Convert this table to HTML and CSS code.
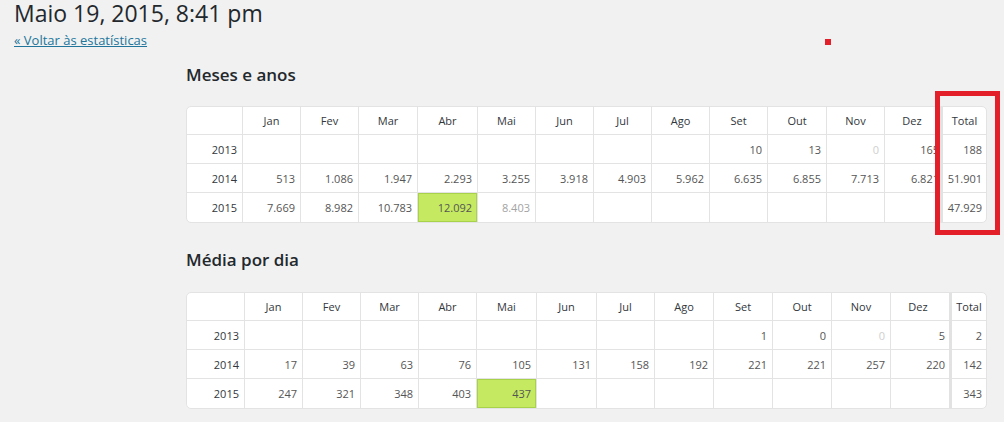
FILE: index.html
```html
<!DOCTYPE html>
<html lang="pt">
<head>
<meta charset="utf-8">
<title>Estatísticas</title>
<link rel="stylesheet" href="styles.css">
</head>
<body>
<div class="page">
  <h1 class="title">Maio 19, 2015, 8:41 pm</h1>
  <a class="back" href="#">« Voltar às estatísticas</a>

  <section class="block">
    <h2 class="block-title">Meses e anos</h2>
    <div class="stats t1">
      <div class="grid">
        <div class="c hd"></div><div class="c hd">Jan</div><div class="c hd">Fev</div><div class="c hd">Mar</div><div class="c hd">Abr</div><div class="c hd">Mai</div><div class="c hd">Jun</div><div class="c hd">Jul</div><div class="c hd">Ago</div><div class="c hd">Set</div><div class="c hd">Out</div><div class="c hd">Nov</div><div class="c hd last">Dez</div>
        <div class="c yr">2013</div><div class="c"></div><div class="c"></div><div class="c"></div><div class="c"></div><div class="c"></div><div class="c"></div><div class="c"></div><div class="c"></div><div class="c">10</div><div class="c">13</div><div class="c zero">0</div><div class="c last">165</div>
        <div class="c yr">2014</div><div class="c">513</div><div class="c">1.086</div><div class="c">1.947</div><div class="c">2.293</div><div class="c">3.255</div><div class="c">3.918</div><div class="c">4.903</div><div class="c">5.962</div><div class="c">6.635</div><div class="c">6.855</div><div class="c">7.713</div><div class="c last">6.821</div>
        <div class="c yr bot">2015</div><div class="c bot">7.669</div><div class="c bot">8.982</div><div class="c bot">10.783</div><div class="c bot hi">12.092</div><div class="c bot light">8.403</div><div class="c bot"></div><div class="c bot"></div><div class="c bot"></div><div class="c bot"></div><div class="c bot"></div><div class="c bot"></div><div class="c bot last"></div>
      </div>
      <div class="sep"></div>
      <div class="totals">
        <div class="c hd">Total</div>
        <div class="c">188</div>
        <div class="c">51.901</div>
        <div class="c bot">47.929</div>
      </div>
    </div>

    <h2 class="block-title second">Média por dia</h2>
    <div class="stats t2">
      <div class="grid">
        <div class="c hd"></div><div class="c hd">Jan</div><div class="c hd">Fev</div><div class="c hd">Mar</div><div class="c hd">Abr</div><div class="c hd">Mai</div><div class="c hd">Jun</div><div class="c hd">Jul</div><div class="c hd">Ago</div><div class="c hd">Set</div><div class="c hd">Out</div><div class="c hd">Nov</div><div class="c hd last">Dez</div>
        <div class="c yr">2013</div><div class="c"></div><div class="c"></div><div class="c"></div><div class="c"></div><div class="c"></div><div class="c"></div><div class="c"></div><div class="c"></div><div class="c">1</div><div class="c">0</div><div class="c zero">0</div><div class="c last">5</div>
        <div class="c yr">2014</div><div class="c">17</div><div class="c">39</div><div class="c">63</div><div class="c">76</div><div class="c">105</div><div class="c">131</div><div class="c">158</div><div class="c">192</div><div class="c">221</div><div class="c">221</div><div class="c">257</div><div class="c last">220</div>
        <div class="c yr bot">2015</div><div class="c bot">247</div><div class="c bot">321</div><div class="c bot">348</div><div class="c bot">403</div><div class="c bot hi">437</div><div class="c bot"></div><div class="c bot"></div><div class="c bot"></div><div class="c bot"></div><div class="c bot"></div><div class="c bot"></div><div class="c bot last"></div>
      </div>
      <div class="sep"></div>
      <div class="totals">
        <div class="c hd">Total</div>
        <div class="c">2</div>
        <div class="c">142</div>
        <div class="c bot">343</div>
      </div>
    </div>
  </section>

  <div class="mark-dot"></div>
  <div class="mark-box"></div>
</div>
</body>
</html>
```

FILE: styles.css
```css
html, body {
  margin: 0;
  padding: 0;
}
body {
  background: #f1f1f1;
  font-family: "Open Sans", "DejaVu Sans", sans-serif;
  color: #32373c;
}
.page {
  position: relative;
  padding: 0 0 0 14px;
  height: 422px;
  box-sizing: border-box;
  overflow: hidden;
}
.title {
  margin: 0;
  font-size: 23px;
  line-height: 27px;
  font-weight: 400;
  color: #23282d;
}
.back {
  display: inline-block;
  margin-top: 4px;
  font-size: 13px;
  line-height: 18px;
  color: #21759b;
  text-decoration: underline;
}
.block {
  margin: 15px 0 0 172px;
  width: 801px;
}
.block-title {
  margin: 0 0 21px;
  font-size: 17px;
  line-height: 20px;
  font-weight: 600;
  color: #23282d;
}
.block-title.second {
  margin-top: 27px;
  margin-bottom: 22px;
}
.stats {
  display: flex;
  width: 801px;
  box-sizing: border-box;
  background: #fff;
  border: 1px solid #e3e3e3;
  border-radius: 5px;
  overflow: hidden;
}
.grid {
  flex: 1;
  display: grid;
  grid-template-rows: 28px 29px 29px 29px;
}
.t1 .grid {
  grid-template-columns: 56px 58px 58px 59px 60px 58px 58px 58px 58px 58px 59px 58px 55px;
}
.t2 .grid {
  grid-template-columns: 58px 58px 58px 58px 58px 60px 60px 58px 59px 59px 59px 59px 58px;
}
.sep {
  width: 3px;
  background: #e2e2e2;
}
.totals {
  display: grid;
  grid-template-rows: 28px 29px 29px 29px;
}
.t1 .totals { width: 43px; }
.t2 .totals { width: 34px; }
.c {
  display: flex;
  align-items: center;
  justify-content: flex-end;
  padding-right: 5px;
  border-right: 1px solid #e3e3e3;
  border-bottom: 1px solid #e3e3e3;
  font-size: 11px;
  color: #555;
  white-space: nowrap;
  overflow: hidden;
}
.c.hd {
  justify-content: center;
  padding-right: 0;
  color: #32373c;
}
.c.yr {
  color: #32373c;
}
.c.last {
  border-right: none;
  padding-right: 1px;
}
.t2 .c.last {
  padding-right: 4px;
}
.totals .c {
  border-right: none;
  padding-right: 4px;
}
.totals .c.hd {
  padding-right: 0;
}
.c.bot {
  border-bottom: none;
}
.c.hi {
  background: #c5ea61;
  box-shadow: inset 0 0 0 1px #a8d24a;
  color: #555;
}
.c.light {
  color: #a3a3a3;
}
.c.zero {
  color: #cfcfcf;
}
.mark-dot {
  position: absolute;
  left: 825px;
  top: 39px;
  width: 6px;
  height: 6px;
  background: #e3202a;
}
.mark-box {
  position: absolute;
  left: 935px;
  top: 91px;
  width: 65px;
  height: 144px;
  box-sizing: border-box;
  border: 5px solid #e3202a;
}
```
